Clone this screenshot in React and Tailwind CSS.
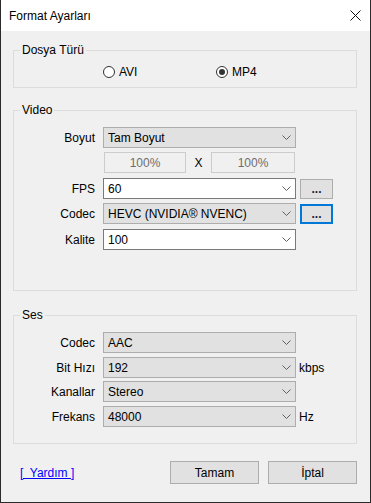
import React from "react";

function Chevron() {
  return (
    <svg width="9" height="5" viewBox="0 0 9 5" className="block">
      <path d="M0.5 0.5 L4.5 4.5 L8.5 0.5" fill="none" stroke="#606060" strokeWidth="1" />
    </svg>
  );
}

function Combo({ value, white }) {
  return (
    <div
      className={`flex h-[21px] w-[193px] items-center justify-between border pl-[4px] pr-[4px] ${
        white ? "border-[#7a7a7a] bg-white" : "border-[#adadad] bg-[#e1e1e1]"
      }`}
    >
      <span className="leading-[14px]">{value}</span>
      <Chevron />
    </div>
  );
}

function Row({ label, children, className = "" }) {
  return (
    <div className={`flex h-[21px] items-center ${className}`}>
      <div className="w-[81px] text-right leading-[14px]">{label}</div>
      <div className="ml-[8px] flex items-center">{children}</div>
    </div>
  );
}

function DotsButton({ focused }) {
  return (
    <div
      className={`ml-[4px] flex h-[20px] w-[33px] items-center justify-center bg-[#e1e1e1] leading-[14px] ${
        focused ? "border-2 border-[#0078d7]" : "border border-[#adadad]"
      }`}
    >
      <span className="font-bold text-[#1a1a3a]">...</span>
    </div>
  );
}

function Radio({ label, checked, className = "" }) {
  return (
    <div className={`flex items-center gap-[4px] ${className}`}>
      <div className="flex h-[12px] w-[12px] items-center justify-center rounded-full border border-[#333333] bg-white">
        {checked && <div className="h-[6px] w-[6px] rounded-full bg-[#333333]" />}
      </div>
      <span className="leading-[14px]">{label}</span>
    </div>
  );
}

function Group({ title, children, className = "" }) {
  return (
    <fieldset className={`ml-[12px] w-[344px] border border-[#dcdcdc] p-0 ${className}`}>
      <legend className="ml-[6px] px-[2px] leading-[14px]">{title}</legend>
      {children}
    </fieldset>
  );
}

export default function App() {
  return (
    <div className="flex h-[503px] w-[371px] flex-col border-x border-b border-[#2b2b2b] bg-[#f0f0f0] font-['Liberation_Sans',Arial,sans-serif] text-[12px] text-black">
      {/* Title bar */}
      <div className="flex h-[31px] shrink-0 items-center justify-between bg-white pl-[8px] pr-[9px]">
        <span className="leading-[14px]">Format Ayarları</span>
        <svg width="11" height="11" viewBox="0 0 11 11" className="block">
          <path d="M0.5 0.5 L10.5 10.5 M10.5 0.5 L0.5 10.5" stroke="#111" strokeWidth="1" fill="none" />
        </svg>
      </div>

      {/* Dosya Türü */}
      <Group title="Dosya Türü" className="mt-[12px]">
        <div className="flex h-[30px] items-center pl-[89px]">
          <Radio label="AVI" className="w-[113px]" />
          <Radio label="MP4" checked />
        </div>
      </Group>

      {/* Video */}
      <Group title="Video" className="mt-[15px]">
        <div className="flex h-[173px] flex-col">
          <Row label="Boyut" className="mt-[10px]">
            <Combo value="Tam Boyut" />
          </Row>
          <div className="ml-[90px] mt-[4px] flex h-[21px] items-center">
            <div className="flex h-[21px] w-[82px] items-center justify-center border border-[#cccccc] bg-[#f0f0f0] text-[#6d6d6d]">
              100%
            </div>
            <div className="w-[25px] text-center">X</div>
            <div className="flex h-[21px] w-[84px] items-center justify-center border border-[#cccccc] bg-[#f0f0f0] text-[#6d6d6d]">
              100%
            </div>
          </div>
          <Row label="FPS" className="mt-[5px]">
            <Combo value="60" white />
            <DotsButton />
          </Row>
          <Row label="Codec" className="mt-[4px]">
            <Combo value="HEVC (NVIDIA® NVENC)" />
            <DotsButton focused />
          </Row>
          <Row label="Kalite" className="mt-[5px]">
            <Combo value="100" white />
          </Row>
        </div>
      </Group>

      {/* Ses */}
      <Group title="Ses" className="mt-[17px]">
        <div className="flex h-[121px] flex-col">
          <Row label="Codec" className="mt-[10px]">
            <Combo value="AAC" />
          </Row>
          <Row label="Bit Hızı" className="mt-[4px]">
            <Combo value="192" />
            <span className="ml-[3px] leading-[14px]">kbps</span>
          </Row>
          <Row label="Kanallar" className="mt-[3px]">
            <Combo value="Stereo" />
          </Row>
          <Row label="Frekans" className="mt-[4px]">
            <Combo value="48000" />
            <span className="ml-[3px] leading-[14px]">Hz</span>
          </Row>
        </div>
      </Group>

      {/* Buttons */}
      <div className="mt-[17px] flex items-center pl-[19px] pr-[13px]">
        <a className="whitespace-pre leading-[14px] text-[#0000ff] underline">{"[  Yardım ]"}</a>
        <div className="ml-auto flex gap-[9px]">
          <div className="flex h-[23px] w-[89px] items-center justify-center border border-[#adadad] bg-[#e1e1e1] leading-[14px]">
            Tamam
          </div>
          <div className="flex h-[23px] w-[89px] items-center justify-center border border-[#adadad] bg-[#e1e1e1] leading-[14px]">
            İptal
          </div>
        </div>
      </div>
    </div>
  );
}
